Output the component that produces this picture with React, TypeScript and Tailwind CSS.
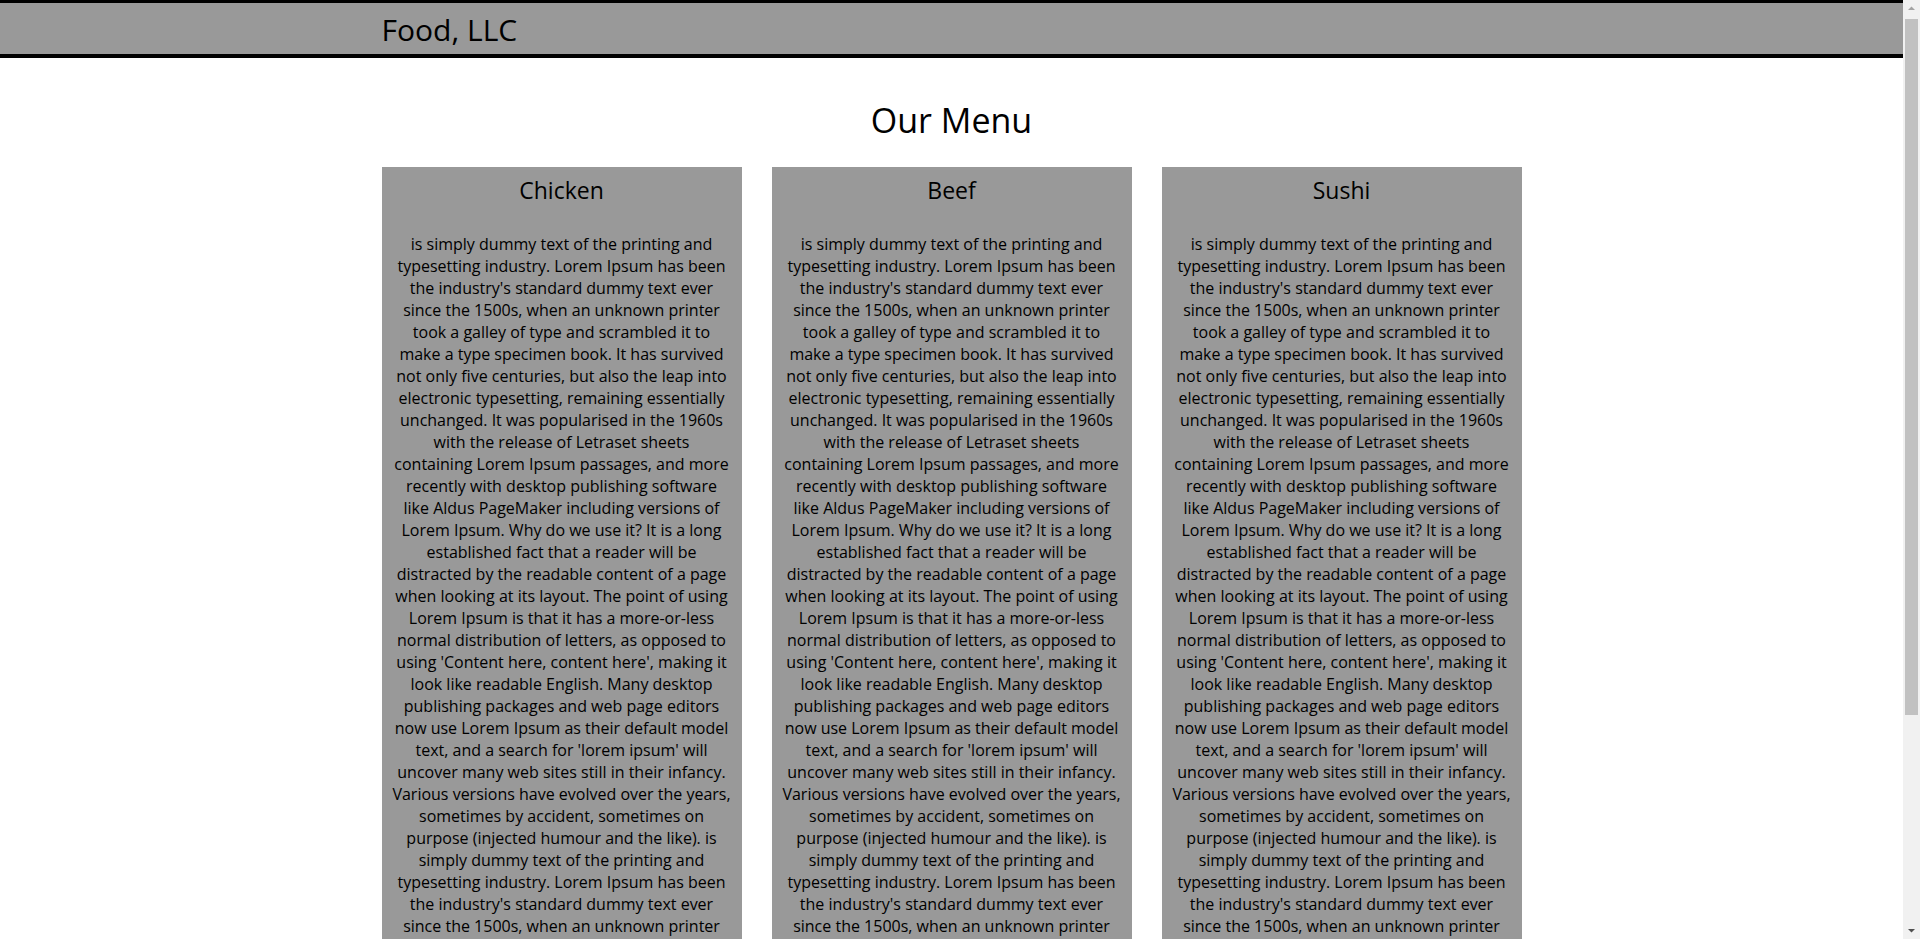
const cycle = [
  "typesetting industry. Lorem Ipsum has been",
  "the industry's standard dummy text ever",
  "since the 1500s, when an unknown printer",
  "took a galley of type and scrambled it to",
  "make a type specimen book. It has survived",
  "not only five centuries, but also the leap into",
  "electronic typesetting, remaining essentially",
  "unchanged. It was popularised in the 1960s",
  "with the release of Letraset sheets",
  "containing Lorem Ipsum passages, and more",
  "recently with desktop publishing software",
  "like Aldus PageMaker including versions of",
  "Lorem Ipsum. Why do we use it? It is a long",
  "established fact that a reader will be",
  "distracted by the readable content of a page",
  "when looking at its layout. The point of using",
  "Lorem Ipsum is that it has a more-or-less",
  "normal distribution of letters, as opposed to",
  "using 'Content here, content here', making it",
  "look like readable English. Many desktop",
  "publishing packages and web page editors",
  "now use Lorem Ipsum as their default model",
  "text, and a search for 'lorem ipsum' will",
  "uncover many web sites still in their infancy.",
  "Various versions have evolved over the years,",
  "sometimes by accident, sometimes on",
];

// the paragraph is repeated twice, so the wrap of the second pass repeats the first
const lines = [
  "is simply dummy text of the printing and",
  ...cycle,
  "purpose (injected humour and the like). is",
  "simply dummy text of the printing and",
  ...cycle,
  "purpose (injected humour and the like).",
];

const dishes = ["Chicken", "Beef", "Sushi"];

const MenuCard = ({ name }: { name: string }) => (
  <div className="w-[360px] bg-[#999999] pt-[8px] pb-[16px] text-center text-black">
    <h3 className="text-[23px] leading-[30px] font-normal mb-[28px]">{name}</h3>
    <p className="text-[16px] leading-[22px]">
      {lines.map((line, i) => (
        <span key={i} className="block whitespace-nowrap">
          {line}
        </span>
      ))}
    </p>
  </div>
);

// window scrollbar as it shows in the screenshot
const FakeScrollbar = () => (
  <div className="fixed top-0 right-0 w-[17px] h-screen bg-[#f1f1f1] flex flex-col items-center">
    <svg width="17" height="17" viewBox="0 0 17 17" className="shrink-0">
      <path d="M5 10 L8.5 6.5 L12 10 Z" fill="#a3a3a3" />
    </svg>
    <div className="w-[13px] h-[696px] mt-[2px] bg-[#c1c1c1]" />
    <div className="flex-1" />
    <svg width="17" height="17" viewBox="0 0 17 17" className="shrink-0">
      <path d="M5 7 L8.5 10.5 L12 7 Z" fill="#505050" />
    </svg>
  </div>
);

export default function App() {
  return (
    <div className="min-h-screen bg-white text-black font-['Open_Sans',sans-serif]">
      <div className="mr-[17px]">
        <header className="bg-[#999999] border-t-[3px] border-b-[4px] border-black h-[58px]">
          <div className="w-[1140px] mx-auto pt-[3px]">
            <h1 className="text-[30px] leading-[48px] font-normal">Food, LLC</h1>
          </div>
        </header>

        <main className="w-[1140px] mx-auto pb-10">
          <h2 className="mt-[40px] mb-[24px] text-center text-[34px] leading-[45px] font-normal">
            Our Menu
          </h2>
          <div className="flex gap-[30px] items-start">
            {dishes.map((d) => (
              <MenuCard key={d} name={d} />
            ))}
          </div>
        </main>
      </div>
      <FakeScrollbar />
    </div>
  );
}
